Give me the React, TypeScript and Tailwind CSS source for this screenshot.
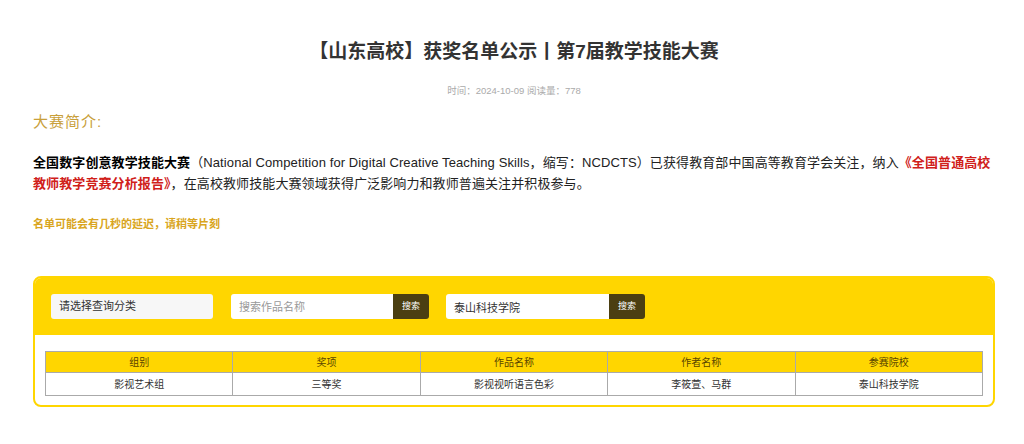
import { useState } from "react";

const rows = [
  {
    group: "影视艺术组",
    award: "三等奖",
    work: "影视视听语言色彩",
    author: "李筱萱、马群",
    school: "泰山科技学院",
  },
];

const headers = ["组别", "奖项", "作品名称", "作者名称", "参赛院校"];

export default function App() {
  const [workName, setWorkName] = useState("");
  const [school, setSchool] = useState("泰山科技学院");

  return (
    <div className="min-h-[444px] bg-white font-['Liberation_Sans','Noto_Sans_CJK_SC',sans-serif] text-[#333]">
      <div className="ml-[33px] w-[962px] pt-[38px]">
        {/* 标题 */}
        <h1 className="text-center text-[19px] font-bold leading-[28px] text-[#333]">
          【山东高校】获奖名单公示丨第7届教学技能大赛
        </h1>
        <p className="mt-[18px] text-center text-[9.5px] leading-[14px] text-[#aaa]">
          时间：2024-10-09 阅读量：778
        </p>

        {/* 大赛简介 */}
        <h2 className="mt-[13px] text-[15px] leading-[22px] tracking-[1px] text-[#c9a03a]">
          大赛简介:
        </h2>
        <p className="mt-[19px] pr-[2px] text-[13px] leading-[21px] tracking-[0.1px] text-[#222]">
          <span className="font-bold text-black">全国数字创意教学技能大赛</span>
          （National Competition for Digital Creative Teaching Skills，缩写：NCDCTS）已获得教育部中国高等教育学会关注，纳入
          <span className="font-bold text-[#d0201a]">《全国普通高校教师教学竞赛分析报告》</span>
          ，在高校教师技能大赛领域获得广泛影响力和教师普遍关注并积极参与。
        </p>
        <p className="mt-[22px] text-[11px] font-bold leading-[16px] text-[#d9a520]">
          名单可能会有几秒的延迟，请稍等片刻
        </p>

        {/* 查询面板 */}
        <div className="mt-[44px] overflow-hidden rounded-[8px] border-2 border-[#ffd600] bg-white">
          <div className="flex items-center bg-[#ffd600] px-[16px] pb-[16px] pt-[16px]">
            <div className="flex h-[25px] w-[162px] items-center rounded-[3px] bg-[#f7f7f7] px-[8px] text-[11px] text-[#333]">
              请选择查询分类
            </div>
            <div className="ml-[18px] flex h-[25px]">
              <input
                value={workName}
                onChange={(e) => setWorkName(e.target.value)}
                placeholder="搜索作品名称"
                className="h-full w-[162px] rounded-l-[3px] bg-white px-[8px] text-[11px] text-[#333] outline-none placeholder:text-[#999]"
              />
              <button className="h-full w-[36px] rounded-r-[3px] bg-[#4b3f12] text-[9px] text-white">
                搜索
              </button>
            </div>
            <div className="ml-[17px] flex h-[25px]">
              <input
                value={school}
                onChange={(e) => setSchool(e.target.value)}
                className="h-full w-[163px] rounded-l-[3px] bg-white px-[8px] text-[11px] text-[#333] outline-none"
              />
              <button className="h-full w-[36px] rounded-r-[3px] bg-[#4b3f12] text-[9px] text-white">
                搜索
              </button>
            </div>
          </div>

          <div className="px-[10px] pb-[9px] pt-[16px]">
            <table className="w-full table-fixed border-collapse text-[10px]">
              <thead>
                <tr className="bg-[#ffd600]">
                  {headers.map((h) => (
                    <th
                      key={h}
                      className="h-[21px] border border-[#aaa] font-normal text-[#5a4500]"
                    >
                      {h}
                    </th>
                  ))}
                </tr>
              </thead>
              <tbody>
                {rows.map((r) => (
                  <tr key={r.work}>
                    <td className="h-[23px] border border-[#aaa] text-center text-[#333]">{r.group}</td>
                    <td className="border border-[#aaa] text-center text-[#333]">{r.award}</td>
                    <td className="border border-[#aaa] text-center text-[#333]">{r.work}</td>
                    <td className="border border-[#aaa] text-center text-[#333]">{r.author}</td>
                    <td className="border border-[#aaa] text-center text-[#333]">{r.school}</td>
                  </tr>
                ))}
              </tbody>
            </table>
          </div>
        </div>
      </div>
    </div>
  );
}
